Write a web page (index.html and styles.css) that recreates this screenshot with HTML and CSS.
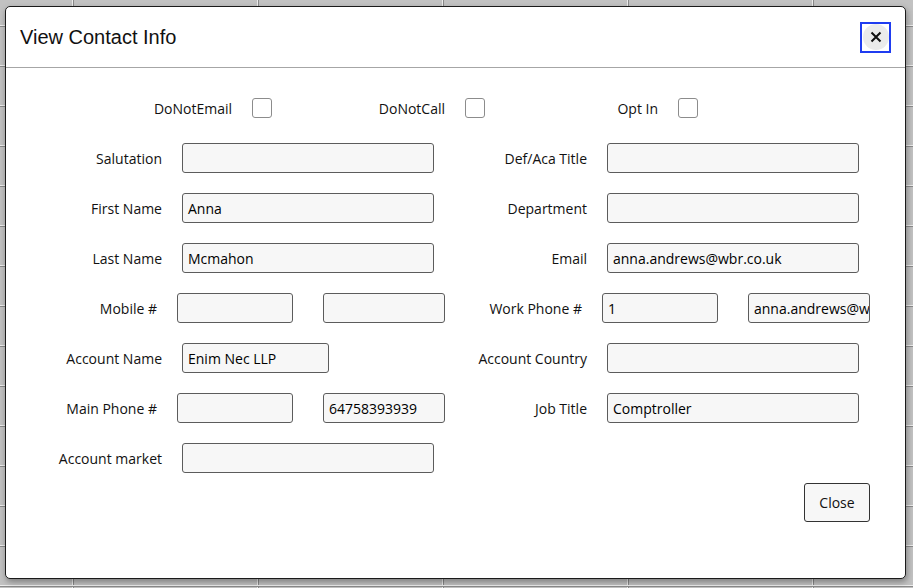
FILE: index.html
```html
<!DOCTYPE html>
<html>
<head>
<meta charset="utf-8">
<link rel="stylesheet" href="styles.css">
</head>
<body>
<div class="modal">
  <div class="modal-header">
    <h1 class="title">View Contact Info</h1>
    <button class="x-btn" aria-label="Close">
      <span class="x-circle">
        <svg width="12" height="12" viewBox="0 0 12 12"><path d="M1.5 1.5 L10.5 10.5 M10.5 1.5 L1.5 10.5" stroke="#111" stroke-width="2" fill="none"/></svg>
      </span>
    </button>
  </div>
  <div class="modal-body">
    <div class="checks">
      <div class="check"><span class="clabel">DoNotEmail</span><span class="cbox"></span></div>
      <div class="check"><span class="clabel">DoNotCall</span><span class="cbox"></span></div>
      <div class="check"><span class="clabel">Opt In</span><span class="cbox"></span></div>
    </div>
    <div class="row">
      <div class="field"><span class="label">Salutation</span><div class="input"></div></div>
      <div class="field"><span class="label">Def/Aca Title</span><div class="input"></div></div>
    </div>
    <div class="row">
      <div class="field"><span class="label">First Name</span><div class="input">Anna</div></div>
      <div class="field"><span class="label">Department</span><div class="input"></div></div>
    </div>
    <div class="row">
      <div class="field"><span class="label">Last Name</span><div class="input">Mcmahon</div></div>
      <div class="field"><span class="label">Email</span><div class="input">anna.andrews@wbr.co.uk</div></div>
    </div>
    <div class="row">
      <div class="field phone"><span class="label">Mobile #</span><div class="input short"></div><div class="input short2"></div></div>
      <div class="field phone"><span class="label">Work Phone #</span><div class="input short">1</div><div class="input short2 clip">anna.andrews@wbr.co.uk</div></div>
    </div>
    <div class="row">
      <div class="field"><span class="label">Account Name</span><div class="input mid">Enim Nec LLP</div></div>
      <div class="field"><span class="label">Account Country</span><div class="input"></div></div>
    </div>
    <div class="row">
      <div class="field phone"><span class="label">Main Phone #</span><div class="input short"></div><div class="input short2">64758393939</div></div>
      <div class="field"><span class="label">Job Title</span><div class="input">Comptroller</div></div>
    </div>
    <div class="row">
      <div class="field"><span class="label">Account market</span><div class="input"></div></div>
    </div>
    <div class="footer">
      <button class="close-btn">Close</button>
    </div>
  </div>
</div>
</body>
</html>
```

FILE: styles.css
```css
html, body {
  margin: 0;
  padding: 0;
}
body {
  width: 913px;
  height: 588px;
  overflow: hidden;
  background-color: #c2c2c2;
  background-image:
    repeating-linear-gradient(to bottom, transparent 0, transparent 25px, #ececec 25px, #ececec 26px, #8a8a8a 26px, #8a8a8a 27px, transparent 27px, transparent 40px),
    repeating-linear-gradient(to right, transparent 0, transparent 72px, #ececec 72px, #ececec 73px, #8a8a8a 73px, #8a8a8a 74px, transparent 74px, transparent 185px);
  font-family: "Open Sans", "Noto Sans", sans-serif;
  padding-top: 6px;
  padding-left: 5px;
  box-sizing: border-box;
}
.modal {
  width: 901px;
  height: 573px;
  box-sizing: border-box;
  background: #fff;
  border: 1px solid #1a1a1a;
  border-radius: 5px;
  box-shadow: 1px 3px 6px rgba(0,0,0,0.35);
  display: flex;
  flex-direction: column;
}
.modal-header {
  height: 61px;
  box-sizing: border-box;
  border-bottom: 1px solid #a6a6a6;
  display: flex;
  align-items: center;
  justify-content: space-between;
  padding: 0 14px 0 14px;
}
.title {
  margin: 0;
  font-family: "Liberation Sans", Arial, sans-serif;
  font-weight: normal;
  font-size: 20px;
  color: #111;
  padding-top: 1px;
}
.x-btn {
  width: 31px;
  height: 31px;
  box-sizing: border-box;
  border: 2px solid #1f3cf0;
  background: #fff;
  padding: 0;
  margin: 0;
  display: flex;
  align-items: center;
  justify-content: center;
}
.x-circle {
  width: 26px;
  height: 26px;
  border-radius: 50%;
  background: #ebebeb;
  display: flex;
  align-items: center;
  justify-content: center;
}
.modal-body {
  padding: 15px 0 0 30px;
  font-size: 14px;
  color: #111;
}
.checks {
  display: flex;
  height: 50px;
  align-items: center;
  padding-left: 70px;
}
.check {
  width: 213px;
  display: flex;
  align-items: center;
}
.clabel {
  width: 126px;
  text-align: right;
  margin-right: 20px;
}
.cbox {
  width: 20px;
  height: 20px;
  box-sizing: border-box;
  border: 1px solid #8c8c8c;
  border-radius: 3px;
  background: #fff;
}
.row {
  display: grid;
  grid-template-columns: 425px 425px;
  height: 50px;
  align-items: center;
}
.field {
  display: flex;
  align-items: center;
}
.field.phone {
  margin-left: -5px;
}
.label {
  width: 126px;
  text-align: right;
  margin-right: 20px;
  white-space: nowrap;
}
.input {
  width: 252px;
  height: 30px;
  box-sizing: border-box;
  border: 1px solid #5c5c5c;
  border-radius: 3px;
  background: #f7f7f7;
  padding: 0 5px;
  display: flex;
  align-items: center;
  white-space: nowrap;
  overflow: hidden;
  color: #000;
}
.input.clip {
  padding-right: 0;
}
.input.short {
  width: 116px;
}
.input.short2 {
  width: 122px;
  margin-left: 30px;
}
.input.mid {
  width: 147px;
}
.footer {
  display: flex;
  justify-content: flex-end;
  padding-right: 35px;
}
.close-btn {
  width: 66px;
  height: 39px;
  box-sizing: border-box;
  border: 1px solid #333;
  border-radius: 3px;
  background: #f7f7f7;
  font-family: "Open Sans", "Noto Sans", sans-serif;
  font-size: 14px;
  color: #111;
  padding: 0;
}
```
